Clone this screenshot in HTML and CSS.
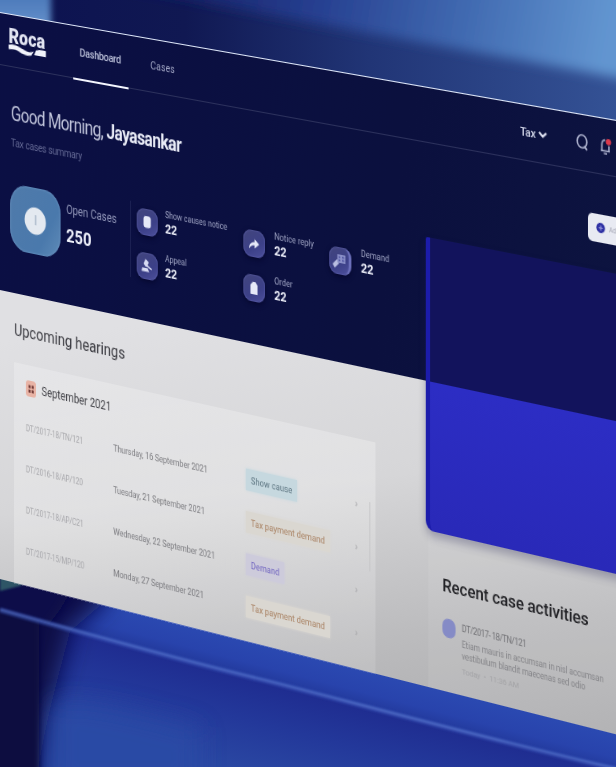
FILE: index.html
```html
<!DOCTYPE html>
<html lang="en">
<head>
<meta charset="utf-8">
<title>Roca – Dashboard</title>
<link rel="stylesheet" href="styles.css">
</head>
<body>
<div class="scene">
  <svg class="backdrop" viewBox="0 0 616 767" aria-hidden="true">
    <defs>
      <filter id="b6" x="-30%" y="-30%" width="160%" height="160%"><feGaussianBlur stdDeviation="6"/></filter>
      <filter id="b12" x="-30%" y="-60%" width="160%" height="220%"><feGaussianBlur stdDeviation="12"/></filter>
      <filter id="b3" x="-30%" y="-30%" width="160%" height="160%"><feGaussianBlur stdDeviation="3"/></filter>
      <filter id="b1" x="-5%" y="-5%" width="110%" height="110%"><feGaussianBlur stdDeviation="1.1"/></filter>
      <linearGradient id="top" x1="0" x2="1" y1="0" y2="0">
        <stop offset="0" stop-color="#0c1250"/><stop offset=".3" stop-color="#101852"/><stop offset=".6" stop-color="#213576"/><stop offset="1" stop-color="#345295"/>
      </linearGradient>
      <linearGradient id="sky" gradientUnits="userSpaceOnUse" x1="190" y1="0" x2="600" y2="75">
        <stop offset="0" stop-color="#18246c"/><stop offset=".3" stop-color="#263f90"/><stop offset=".65" stop-color="#4069b0"/><stop offset="1" stop-color="#6295d0"/>
      </linearGradient>
      <linearGradient id="left" x1="0" x2="0" y1="0" y2="1">
        <stop offset="0" stop-color="#3f6cb0"/><stop offset=".6" stop-color="#6592cc"/><stop offset="1" stop-color="#6a96ce"/>
      </linearGradient>
      <linearGradient id="shelf" gradientUnits="userSpaceOnUse" x1="300" y1="650" x2="286" y2="704">
        <stop offset="0" stop-color="#2b4ab2"/><stop offset=".45" stop-color="#2843ac"/><stop offset="1" stop-color="#1b2c86"/>
      </linearGradient>
      <linearGradient id="front" gradientUnits="userSpaceOnUse" x1="210" y1="660" x2="186" y2="756">
        <stop offset="0" stop-color="#1e2a8e"/><stop offset=".5" stop-color="#23389a"/><stop offset="1" stop-color="#2a47a2"/>
      </linearGradient>
    </defs>
    <rect width="616" height="300" fill="url(#top)"/>
    <path d="M120 -40H680V90C560 66 330 28 120 -14Z" fill="url(#sky)" filter="url(#b6)"/>
    <path d="M-20 -20H51V60H-20Z" fill="url(#left)" filter="url(#b3)"/>
    <rect y="540" width="616" height="227" fill="url(#shelf)"/>
    <path d="M-60 530H150L100 606 60 640 40 680H-60Z" fill="#080a48" filter="url(#b12)"/>
    <path d="M-40 560H90L60 610 30 650H-40Z" fill="#080a48" filter="url(#b6)"/>
    <path d="M0 570H40L20 586 0 591Z" fill="#2f5566" filter="url(#b1)"/>
    <clipPath id="under"><path d="M0 610C100 638 180 660 250 677S480 738 616 769H0Z"/></clipPath>
    <g clip-path="url(#under)">
      <rect y="600" width="616" height="170" fill="url(#front)"/>
      <path d="M-60 560H84C72 650 46 690 30 830H-60Z" fill="#0b0a44" filter="url(#b12)"/>
      <path d="M50 706C70 694 130 710 200 728V790H50Z" fill="#2c4ba6" opacity=".75" filter="url(#b12)"/>
      <path d="M-40 590H39V800H-40Z" fill="#0b0a40" filter="url(#b3)"/>
    </g>
    <path d="M0 610C100 638 180 660 250 677S480 738 616 769" fill="none" stroke="#3f5fc2" stroke-width="5" opacity=".5" filter="url(#b1)"/>
    <path d="M0 609.500C100 637.500 180 659.500 250 676.500S480 737.500 616 768.500" fill="none" stroke="#6f8cda" stroke-width="1.600" opacity=".55" filter="url(#b1)"/>
  </svg>

  <div class="screen">
    <header class="hero">
      <nav class="nav">
        <div class="logo">
          <span class="logo-name">Roca</span>
          <svg width="48" height="9" viewBox="0 0 48 9"><path d="M0 1C8-1 14 2 21 4 26 5.500 29 5 32 3.500L29 8C24 9.500 19 8.500 14 6.500 9 4.500 5 5 0 5.500Z" fill="#f1f3fb"/><path d="M35 2Q41 0 47.500 1V7H32.500Z" fill="#f1f3fb"/></svg>
        </div>
        <a class="tab active">Dashboard</a>
        <a class="tab">Cases</a>
        <div class="tools">
          <span class="company">Tax</span>
          <svg class="caret" width="10" height="6" viewBox="0 0 10 6"><path d="M1 1L5 4.500 9 1" fill="none" stroke="#dfe2f2" stroke-width="2.200"/></svg>
          <svg class="search" width="14" height="16" viewBox="0 0 14 16"><ellipse cx="6.500" cy="7.500" rx="5.300" ry="6" fill="none" stroke="#a9aeca" stroke-width="1.700"/><path d="M9 11.500L12 14.800" stroke="#a9aeca" stroke-width="1.900"/></svg>
          <svg class="bell" width="15" height="17" viewBox="0 0 15 17"><path d="M2 12.500H12M3.300 12V7C3.300 4 5 2.500 7 2.500M11 7.500V12M5.500 15H9" fill="none" stroke="#a9aeca" stroke-width="1.600"/><circle cx="10.500" cy="3.800" r="2.900" fill="#dc3a4c"/></svg>
        </div>
      </nav>
      <div class="intro">
        <div>
          <h1>Good Morning, <b>Jayasankar</b></h1>
          <p class="sub">Tax cases summary</p>
        </div>
        <button class="add"><svg width="10" height="11" viewBox="0 0 9 10"><circle cx="4.500" cy="5" r="4.300" fill="#2f31a4"/><path d="M2.500 5H6.500M4.500 3V7" stroke="#9a9cdc"/></svg>Ad</button>
      </div>
      <div class="stats">
        <div class="total">
          <span class="total-icon"><svg width="28" height="28" viewBox="0 0 28 28"><circle cx="14" cy="14" r="13.500" fill="#e4e9f0"/><path d="M14.500 8V18" stroke="#b0bccd" stroke-width="1.800"/></svg></span>
          <div><div class="total-label">Open Cases</div><div class="total-value">250</div></div>
        </div>
        <div class="grid">
          <div class="stat"><span class="tile"><svg width="14" height="14" viewBox="0 0 14 14"><rect x="2.500" y="1" width="9" height="11.500" rx="3" fill="#e6e9f8"/></svg></span><div><div class="label first">Show causes notice</div><div class="value">22</div></div></div>
          <div class="stat"><span class="tile"><svg width="14" height="14" viewBox="0 0 14 14"><path d="M1 12.500C1 7.500 4 5.500 7.500 5.500V2.500L13 7 7.500 11.500V8.500C4.500 8.500 3 9.500 1 12.500Z" fill="#e6e9f8"/></svg></span><div><div class="label">Notice reply</div><div class="value">22</div></div></div>
          <div class="stat"><span class="tile lit"><svg width="16" height="16" viewBox="0 0 16 16"><path d="M0 12L5 7 8.500 8 7 11 2.500 15.500Z" fill="#b9bee2"/><rect x="5.500" y="2" width="9.500" height="8" fill="#8b90c8"/><path d="M7 4.500H9M11 4.500H13.500M7 7.500H9M11 7.500H13.500" stroke="#4e53a0" stroke-width="1.300"/></svg></span><div><div class="label">Demand</div><div class="value">22</div></div></div>
          <div class="stat"><span class="tile"><svg width="14" height="14" viewBox="0 0 14 14"><path d="M5 0L9 3 7.500 6 13 9 12.300 10.300 6.500 7.500 5.500 8 2.500 5ZM1 9H7.500L9.500 12.500H0Z" fill="#d6daf2"/></svg></span><div><div class="label first">Appeal</div><div class="value">22</div></div></div>
          <div class="stat"><span class="tile"><svg width="14" height="14" viewBox="0 0 14 14"><path d="M2.500 4L5.500 1H8.500L11 4V13H2.500Z" fill="#e6e9f8"/></svg></span><div><div class="label">Order</div><div class="value">22</div></div></div>
        </div>
      </div>
    </header>

    <main class="content">
      <section class="hearings">
        <h2>Upcoming hearings</h2>
        <div class="card">
          <div class="month"><svg width="13" height="16" viewBox="0 0 13 16"><rect width="13" height="16" rx="3.500" fill="#e8b3a5"/><path d="M3.500 4.500H6V7.500H3.500ZM7.500 4.500H10V7.500H7.500ZM3.500 9H6V12H3.500ZM7.500 9H10V12H7.500Z" fill="#703b37"/></svg>September 2021</div>
          <div class="row"><span class="id">DT/2017-18/TN/121</span><span class="date">Thursday, 16 September 2021</span><span><em class="tag cause">Show cause</em></span><i class="go">›</i></div>
          <div class="row"><span class="id">DT/2016-18/AP/120</span><span class="date">Tuesday, 21 September 2021</span><span><em class="tag tax">Tax payment demand</em></span><i class="go">›</i></div>
          <div class="row"><span class="id">DT/2017-18/AP/C21</span><span class="date">Wednesday, 22 September 2021</span><span><em class="tag demand">Demand</em></span><i class="go">›</i></div>
          <div class="row"><span class="id">DT/2017-15/MP/120</span><span class="date">Monday, 27 September 2021</span><span><em class="tag tax">Tax payment demand</em></span><i class="go">›</i></div>
          <div class="scrollbar"></div>
        </div>
      </section>
      <section class="recent">
        <h2>Recent case activities</h2>
        <div class="activity">
          <span class="dot"></span>
          <div>
            <div class="case">DT/2017- 18/TN/121</div>
            <p class="note">Etiam mauris in accumsan in nisl  accumsan<br>vestibulum blandit maecenas sed odio</p>
            <div class="time">Today &nbsp;•&nbsp; 11:36 AM</div>
          </div>
        </div>
      </section>
    </main>
    <div class="feature"></div>
  </div>
</div>
</body>
</html>
```
FILE: styles.css
```css
* { box-sizing: border-box; }
body { margin: 0; background: #0c1352; }
h1, h2, p { margin: 0; font-weight: 400; }

.scene {
  position: relative;
  width: 616px;
  height: 767px;
  overflow: hidden;
  font-family: Roboto, "Liberation Sans", sans-serif;
}
.backdrop { position: absolute; inset: 0; width: 616px; height: 767px; }

/* The panel is laid out flat, then tilted away from the viewer. */
.screen {
  position: relative;
  width: 780px;
  height: 578.6px;
  padding-top: 11.5px;
  transform-origin: 0 0;
  transform: matrix3d(0.78, 0.1353, 0, -0.000106, 0, 1, 0, 0, 0, 0, 1, 0, 0, 0, 0, 1);
  white-space: nowrap;
}

.hero {
  height: 278px;
  border-top: 1.6px solid #dfe8fa;
  background: linear-gradient(100deg, #0b0f44, #0b103e 60%, #0d1440);
  color: #eef0fa;
}
.nav {
  display: flex;
  height: 52px;
  padding-left: 11px;
  border-bottom: 1px solid #2c315c;
}
.logo { width: 82px; padding-top: 11px; }
.logo-name {
  display: block;
  height: 17px;
  font: 900 20.5px/20px Roboto, sans-serif;
  color: #e2e5f2;
}
.logo svg { display: block; margin-top: 1px; }
.tab {
  padding: 0 8px;
  margin-right: 19px;
  font-size: 10.8px;
  line-height: 52px;
  color: #a3a8c6;
}
.tab.active {
  width: 69px;
  height: 53px;
  border-bottom: 2.6px solid #f4f6ff;
  color: #bfc4dc;
  font-size: 11.2px;
  line-height: 52px;
  font-weight: 500;
  letter-spacing: -.3px;
}
.tools {
  display: flex;
  align-items: center;
  margin-left: auto;
  margin-right: 55px;
}
.company { font-size: 11.5px; font-weight: 500; color: #d6daec; letter-spacing: -.3px; }
.caret { margin-left: 3px; }
.search { margin-left: 32px; }
.bell { margin-left: 11px; }

.intro { display: flex; justify-content: space-between; height: 104px; padding-left: 14px; }
h1 {
  margin-top: 34px;
  font-size: 19.3px;
  line-height: 26px;
  color: #c2c6dc;
  letter-spacing: -.72px;
}
h1 b { font-weight: 700; color: #e8ebf6; }
.sub { margin-top: 9px; font-size: 10.5px; line-height: 14px; color: #666b96; letter-spacing: -.2px; }
.add {
  display: flex;
  align-items: center;
  gap: 4px;
  width: 82px;
  height: 26px;
  margin-top: 37px;
  padding: 0 0 0 9px;
  border: 0;
  border-radius: 5px;
  background: #e8eaf2;
  color: #a4a6b4;
  font: 6.5px Roboto, sans-serif;
}

.stats { display: flex; padding: 6px 0 0 12px; }
.total { display: flex; width: 153px; height: 75px; border-right: 1px solid #1d2254; }
.total-icon {
  display: grid;
  place-items: center;
  width: 64px;
  height: 66px;
  margin: 6px 7px 0 1px;
  border-radius: 21px;
  background: linear-gradient(120deg, #4f7aaa, #4a79ac 70%, #5f8bb8);
  box-shadow: inset 0 0 3px #7199c6;
}
.total-label { margin-top: 14px; font-size: 12px; line-height: 15px; color: #9398ba; letter-spacing: -.1px; }
.total-value { margin-top: 7px; font-size: 18.5px; font-weight: 700; line-height: 22px; }
.grid {
  display: grid;
  grid-template-columns: 130px 102px 90px;
  grid-auto-rows: 43px;
  padding: 5px 0 0 7px;
}
.stat { display: flex; gap: 11px; }
.tile {
  display: grid;
  place-items: center;
  width: 26px;
  height: 26px;
  border-radius: 9px;
  background: linear-gradient(150deg, #42457c, #3c4088 60%, #4d509c);
  box-shadow: inset 0 0 2px #6a6db8, 0 2px 5px #06082f;
}
.tile.lit { border-right: 3px solid #6b6fba; }
.label { margin-top: -4px; font-size: 8.900px; line-height: 12px; color: #a0a5c4; }
.label.first { margin-left: -2px; font-size: 8.600px; letter-spacing: -.05px; }
.label.first + .value { margin-left: -2px; }
.value { font-size: 12.8px; font-weight: 700; line-height: 16px; }

.content {
  display: flex;
  height: 289.100px;
  background: linear-gradient(165deg, #e0e0e3 10%, #d6d6d8 45%, #bcbcbe 75%, #acacae);
}
.hearings { width: 519px; padding: 26px 0 0 18px; }
.hearings h2 { font-size: 16.3px; line-height: 22px; color: #38383e; letter-spacing: -.05px; }
.card {
  position: relative;
  width: 440px;
  height: 221px;
  margin-top: 21px;
  padding: 15px 0 0 15px;
  background: linear-gradient(165deg, #ffffff38, #ffffff44 50%, #ffffff1c);
}
.month {
  display: flex;
  align-items: center;
  gap: 7px;
  height: 16px;
  margin-bottom: 12px;
  font-size: 11.900px;
  color: #404046;
}
.row {
  display: grid;
  grid-template-columns: 110px 162px 129px 10px;
  align-items: center;
  height: 41px;
}
.id { font-size: 8.200px; color: #a8a8ac; letter-spacing: -.15px; }
.date { font-size: 9px; color: #7c7c80; letter-spacing: -.12px; }
.tag {
  display: inline-block;
  padding: 0 6px;
  font-size: 9.200px;
  font-style: normal;
  line-height: 21px;
}
.cause { background: #c6d8df; box-shadow: 0 0 3px #c6d8df; color: #5c7480; }
.tax { background: #dad7d1; box-shadow: 0 0 3px #dad7d1; color: #a98263; }
.demand { background: #cdcbdb; box-shadow: 0 0 3px #cdcbdb; color: #7064c0; }
.go { font: 11px/12px Roboto, sans-serif; color: #a2a2a5; }
.scrollbar {
  position: absolute;
  right: 6px;
  top: 58px;
  width: 1.200px;
  height: 66px;
  background: #c4c4c6;
}

.recent { flex: 1; padding: 178px 0 0 16px; background: #ffffff12; }
.recent h2 { font-size: 17px; font-weight: 500; line-height: 22px; color: #202024; letter-spacing: -.1px; }
.activity { display: flex; gap: 7px; margin-top: 20px; }
.dot { width: 15px; height: 18px; border-radius: 7px; background: #858bc6; }
.case { font-size: 8.700px; line-height: 12px; color: #707074; letter-spacing: -.5px; }
.note { margin-top: 4px; font-size: 8.300px; line-height: 11px; color: #838387; letter-spacing: -.1px; }
.time { margin-top: 4px; font-size: 8px; line-height: 10px; color: #a3a3a6; letter-spacing: -.1px; }

.feature {
  position: absolute;
  left: 516px;
  top: 154px;
  width: 270px;
  height: 277px;
  border-left: 5px solid #1c1cac;
  border-radius: 2px 0 0 9px;
  background: linear-gradient(#12135c 0 135.500px, #2c2dc4 136.500px, #2929b8);
  box-shadow: 0 5px 9px #2020504d;
}
```
